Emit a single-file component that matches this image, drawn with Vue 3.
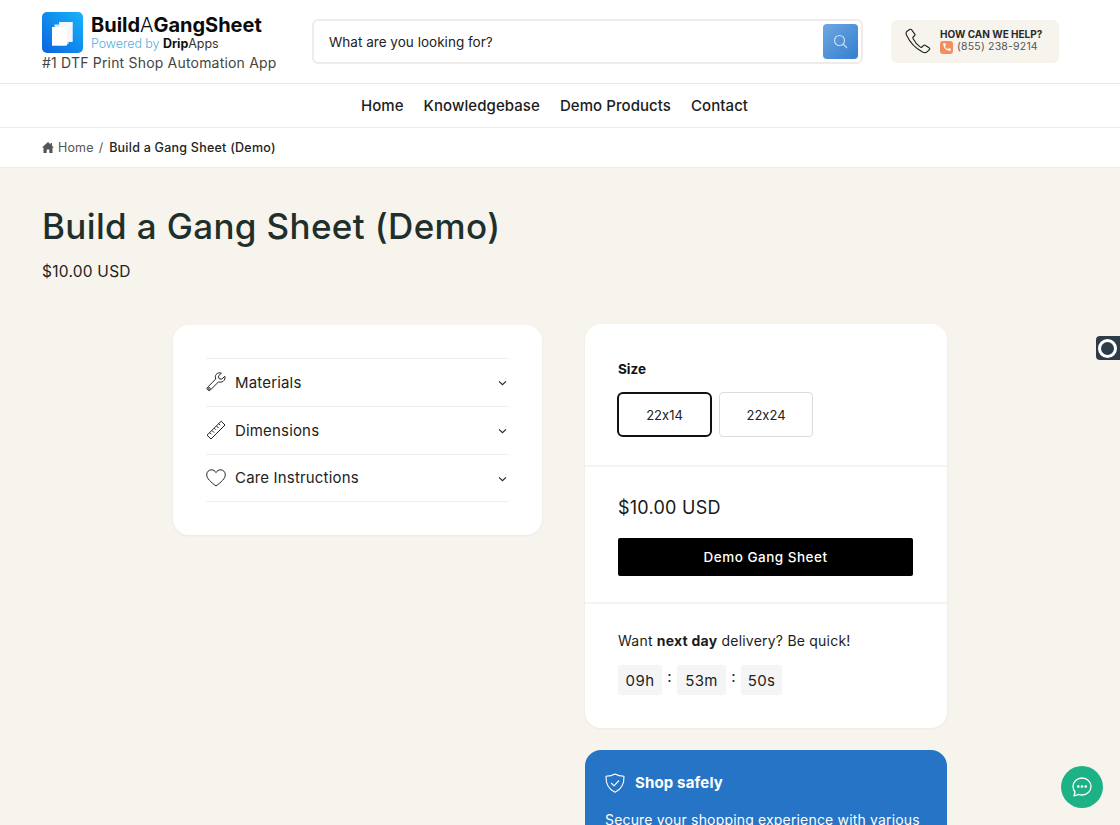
<script setup>
const navItems = ['Home', 'Knowledgebase', 'Demo Products', 'Contact']
const accordions = [
  { label: 'Materials', icon: 'wrench' },
  { label: 'Dimensions', icon: 'ruler' },
  { label: 'Care Instructions', icon: 'heart' }
]
</script>

<template>
  <div class="page">
    <header class="header">
      <div class="brand">
        <div class="brand-top">
          <div class="logo-mark">
            <svg width="41" height="41" viewBox="0 0 41 41">
              <defs>
                <linearGradient id="lg" x1="1" y1="0" x2="0" y2="1">
                  <stop offset="0" stop-color="#17b4fb" />
                  <stop offset="1" stop-color="#0a63e0" />
                </linearGradient>
              </defs>
              <rect width="41" height="41" rx="5" fill="url(#lg)" />
              <path d="M17 10h13.500v20h-4v2h-3v1.500H10V15h2.500v-2.500H17z" fill="#dcecfb" />
              <path d="M18 10h12.500v19.500H18z" fill="#f3f8fe" />
              <path d="M10 15h15v18.500H10z" fill="#ffffff" />
            </svg>
          </div>
          <div class="brand-text">
            <div class="brand-name"><b>Build</b><span class="thin">A</span><b>GangSheet</b></div>
            <div class="brand-sub"><span class="pow">Powered by </span><b>Drip</b><span>Apps</span></div>
          </div>
        </div>
        <div class="tagline">#1 DTF Print Shop Automation App</div>
      </div>

      <div class="search">
        <span class="search-text">What are you looking for?</span>
        <button class="search-btn" aria-label="Search">
          <svg width="15" height="15" viewBox="0 0 15 15" fill="none" stroke="#cfe3f7" stroke-width="1.100">
            <circle cx="6.500" cy="6.500" r="5" />
            <path d="M10.200 10.200L14 14" />
          </svg>
        </button>
      </div>

      <div class="help">
        <svg class="help-phone" width="26" height="26" viewBox="0 0 26 26" fill="none" stroke="#222" stroke-width="1.100" stroke-linejoin="round">
          <path d="M4.500 1.500L1.800 3.500C0.800 4.400 1 6 1.700 7.500C4.500 13.500 10 20 17.500 24C19.500 25 21 24.800 22 23.800L24.500 21.500C25 21 24.900 20.300 24.400 20L20 17.200C19.500 16.900 19 17 18.600 17.400L17 19C16.500 19.500 16 19.500 15.400 19.100C12.500 17 9.500 13.500 8 10.500C7.700 9.900 7.800 9.400 8.200 9L9.700 7.500C10.100 7.100 10.100 6.600 9.800 6.100L6.500 1.700C6 1.100 5.100 1 4.500 1.500Z" />
        </svg>
        <div class="help-text">
          <div class="help-title">HOW CAN WE HELP?</div>
          <div class="help-line">
            <span class="phone-chip">
              <svg width="10" height="10" viewBox="0 0 24 24" fill="#fff"><path d="M6.600 10.800a15 15 0 0 0 6.600 6.600l2.200-2.200c.3-.3.700-.4 1-.2 1.100.4 2.300.6 3.600.6.600 0 1 .4 1 1V20c0 .6-.4 1-1 1C10.600 21 3 13.400 3 4c0-.6.400-1 1-1h3.500c.6 0 1 .4 1 1 0 1.300.2 2.500.6 3.600.1.300 0 .7-.2 1z" /></svg>
            </span>
            <span>(855) 238-9214</span>
          </div>
        </div>
      </div>
    </header>

    <nav class="nav">
      <a v-for="item in navItems" :key="item" class="nav-link">{{ item }}</a>
    </nav>

    <div class="crumbs">
      <svg width="12" height="11" viewBox="0 0 12 11" fill="#555"><path d="M6 0L0 5.500h1.500V11h3.200V7.500h2.600V11h3.200V5.500H12L10 3.700V1H8.600v1.400z" /></svg>
      <span class="crumb-home">Home</span>
      <span class="crumb-sep">/</span>
      <span class="crumb-current">Build a Gang Sheet (Demo)</span>
    </div>

    <main class="main">
      <h1 class="title">Build a Gang Sheet (Demo)</h1>
      <div class="price-top">$10.00 USD</div>

      <div class="product">
        <section class="card left-card">
          <div class="accordion">
            <div v-for="a in accordions" :key="a.label" class="acc-row">
              <svg v-if="a.icon === 'wrench'" class="acc-icon" width="20" height="20" viewBox="0 0 20 20" fill="none" stroke="#222" stroke-width="1" stroke-linejoin="round">
                <path d="M18.800 4.300L15.700 7.200 13 6.600l-.7-2.500L15.400 1.200C13.500.4 11.200.9 10.100 2.500 9.100 3.900 9.200 5.700 9.800 7L1.700 15.100c-.9 1-.9 2 0 2.800.9.900 1.900.9 2.800 0l8.100-8.100c1.500.6 3.100.5 4.500-.5 1.600-1.200 2.300-3.100 1.700-5z" />
                <circle cx="3.200" cy="16.500" r="1" />
              </svg>
              <svg v-else-if="a.icon === 'ruler'" class="acc-icon" width="20" height="20" viewBox="0 0 20 20" fill="none" stroke="#222" stroke-width="1" stroke-linejoin="round">
                <path d="M15.200 1.200L19 5 5 19 1 15.200z" />
                <path d="M12.700 3.700l1.500 1.500M10.500 6l2 2M8.300 8.200l1.500 1.500M6 10.500l2 2M3.800 12.700l1.500 1.500" />
              </svg>
              <svg v-else class="acc-icon" width="20" height="18" viewBox="0 0 20 18" fill="none" stroke="#222" stroke-width="1" stroke-linejoin="round">
                <path d="M10 17C5 13 .7 9.800.7 5.700.7 2.800 2.900.8 5.400.8 7.300.8 9 1.800 10 3.600 11 1.800 12.700.8 14.600.8c2.500 0 4.700 2 4.700 4.900C19.300 9.800 15 13 10 17z" />
              </svg>
              <span class="acc-label">{{ a.label }}</span>
              <svg class="chev" width="9" height="6" viewBox="0 0 10 7" fill="none" stroke="#222" stroke-width="1.300"><path d="M1 1.500L5 5.500 9 1.500" /></svg>
            </div>
          </div>
        </section>

        <div class="right-col">
          <section class="card right-card">
            <div class="block size-block">
              <div class="size-label">Size</div>
              <div class="sizes">
                <div class="size active">22x14</div>
                <div class="size">22x24</div>
              </div>
            </div>
            <div class="block buy-block">
              <div class="price">$10.00 USD</div>
              <button class="buy">Demo Gang Sheet</button>
            </div>
            <div class="block timer-block">
              <div class="want">Want <b>next day</b> delivery? Be quick!</div>
              <div class="timer">
                <span class="t t1">09h</span>
                <span class="colon">:</span>
                <span class="t t2">53m</span>
                <span class="colon">:</span>
                <span class="t t3">50s</span>
              </div>
            </div>
          </section>

          <section class="safe">
            <div class="safe-head">
              <svg width="20" height="20" viewBox="0 0 20 20" fill="none" stroke="#fff" stroke-width="1.100" stroke-linejoin="round">
                <path d="M10 1C7.500 2.500 4.500 3.100 1 3.200 .8 10 2.800 16 10 19.200 17.200 16 19.200 10 19 3.200 15.500 3.100 12.500 2.500 10 1z" />
                <path d="M6.200 10l2.800 2.800 5-5.300" />
              </svg>
              <span>Shop safely</span>
            </div>
            <p class="safe-text">Secure your shopping experience with various payment options and buyer protection.</p>
          </section>
        </div>
      </div>
    </main>

    <div class="side-widget"><span class="ring"></span></div>

    <div class="chat">
      <svg width="22" height="22" viewBox="0 0 22 22" fill="none" stroke="#fff" stroke-width="1.300" stroke-linejoin="round">
        <path d="M11 2c5 0 9 3.600 9 8.500S16 19 11 19c-1.200 0-2.400-.2-3.400-.6L3 20l1-4C2.800 14.500 2 12.600 2 10.500 2 5.600 6 2 11 2z" />
        <circle cx="7.300" cy="10.500" r=".7" fill="#fff" />
        <circle cx="11" cy="10.500" r=".7" fill="#fff" />
        <circle cx="14.700" cy="10.500" r=".7" fill="#fff" />
      </svg>
    </div>
  </div>
</template>

<style>
html, body { margin: 0; overflow: hidden; height: 825px; background: #f7f4ee; }
</style>

<style scoped>
.page {
  position: relative;
  width: 1120px;
  height: 825px;
  overflow: hidden;
  background: #f7f4ee;
  font-family: Inter, "Liberation Sans", sans-serif;
  font-feature-settings: "calt" 0;
  color: #111;
}
.header {
  box-sizing: border-box;
  height: 84px;
  background: #fff;
  border-bottom: 1px solid #e9e9e9;
  display: flex;
  align-items: flex-start;
  padding: 0 0 0 42px;
}
.brand { width: 270px; padding-top: 12px; }
.brand-top { display: flex; gap: 8px; height: 41px; }
.logo-mark { width: 41px; height: 41px; }
.logo-mark svg { display: block; }
.brand-text { padding-top: 1px; }
.brand-name { font-size: 20px; line-height: 24px; letter-spacing: -0.02px; color: #0b0b0b; }
.brand-name b { font-weight: 700; }
.thin { font-weight: 300; }
.brand-sub { font-size: 12.500px; line-height: 13px; color: #333; letter-spacing: -0.05px; }
.pow { color: #56aee0; font-weight: 300; }
.brand-sub b { color: #111; font-weight: 700; }
.tagline { font-size: 14px; line-height: 18px; margin-top: 1px; color: #444; letter-spacing: 0.19px; }
.search {
  box-sizing: border-box;
  margin-top: 19px;
  width: 551px;
  height: 45px;
  background: #fff;
  border: 2px solid #eeecea;
  border-radius: 6px;
  display: flex;
  align-items: center;
  justify-content: space-between;
  padding: 0 3px 0 15px;
}
.search-text { font-size: 13.500px; color: #222; letter-spacing: 0.02px; }
.search-btn {
  width: 35px;
  height: 35px;
  border: 0;
  padding: 0;
  border-radius: 4px;
  background: linear-gradient(135deg, #6ea7e0, #337fd0);
  display: flex;
  align-items: center;
  justify-content: center;
}
.help {
  box-sizing: border-box;
  margin: 20px 0 0 28px;
  width: 168px;
  height: 43px;
  background: #f7f4ee;
  border-radius: 6px;
  display: flex;
  align-items: center;
  padding: 0 0 1px 14px;
  gap: 9px;
}
.help-title { font-size: 10px; line-height: 12px; font-weight: 700; color: #2a2a2a; letter-spacing: 0; }
.help-line { display: flex; align-items: center; gap: 4px; font-size: 10.500px; line-height: 14px; color: #555; letter-spacing: 0.2px; }
.phone-chip {
  width: 13px;
  height: 13px;
  border-radius: 3px;
  background: #f0905e;
  display: flex;
  align-items: center;
  justify-content: center;
}
.nav {
  box-sizing: border-box;
  height: 44px;
  background: #fff;
  border-bottom: 1px solid #ececec;
  display: flex;
  align-items: center;
  justify-content: center;
  gap: 20px;
  padding-right: 11px;
}
.nav-link { font-size: 15px; font-weight: 450; color: #1c1c1c; letter-spacing: 0.07px; }
.crumbs {
  box-sizing: border-box;
  height: 40px;
  background: #fff;
  border-bottom: 1px solid #efedea;
  display: flex;
  align-items: center;
  padding-left: 42px;
  font-size: 12.500px;
}
.crumb-home { margin-left: 4px; color: #555; letter-spacing: 0.15px; }
.crumb-sep { margin: 0 6px 0 5px; color: #555; }
.crumb-current { color: #222; font-weight: 500; letter-spacing: 0.24px; }
.main { padding: 0 0 0 42px; }
.title {
  margin: 33px 0 0;
  font-size: 35px;
  line-height: 50px;
  font-weight: 450;
  color: #1f2f2b;
  letter-spacing: 0.35px;
}
.price-top { margin-top: 10px; font-size: 15.500px; line-height: 22px; color: #222; letter-spacing: 0.25px; }
.product { display: flex; gap: 43px; margin: 41px 0 0 131px; align-items: flex-start; }
.card { background: #fff; box-shadow: 0 1px 3px rgba(0, 0, 0, 0.05); }
.left-card {
  box-sizing: border-box;
  width: 369px;
  height: 210px;
  margin-top: 1px;
  border-radius: 16px;
  padding: 33px 33px;
}
.accordion { border-top: 1px solid #efefef; }
.acc-row {
  height: 47px;
  padding-bottom: 1px;
  box-sizing: content-box;
  height: 46px;
  border-bottom: 1px solid #efefef;
  display: flex;
  align-items: center;
  font-size: 15px;
  color: #222;
}
.acc-row:last-child { height: 45px; }
.acc-icon { flex: none; width: 20px; margin-right: 9px; }
.acc-label { flex: 1; font-weight: 400; letter-spacing: 0.17px; }
.chev { margin-right: 2px; margin-top: 2px; }
.right-col { width: 362px; }
.right-card { border-radius: 16px; height: 404px; overflow: hidden; }
.block { box-sizing: border-box; padding: 0 33px 0 33px; }
.size-block { height: 143px; padding-top: 36px; border-bottom: 2px solid #f7f4ee; }
.size-label { font-size: 13.500px; line-height: 18px; font-weight: 700; color: #111; }
.sizes { display: flex; gap: 7px; margin: 14px 0 0 -1px; }
.size {
  box-sizing: border-box;
  width: 94px;
  height: 45px;
  border: 1px solid #dcdcdc;
  border-radius: 4px;
  display: flex;
  align-items: center;
  justify-content: center;
  font-size: 13px;
  color: #222;
}
.active { width: 95px; border: 2px solid #111; border-radius: 6px; }
.buy-block { height: 137px; padding-top: 27px; border-bottom: 2px solid #f7f4ee; }
.price { font-size: 18px; line-height: 27px; color: #181818; letter-spacing: 0.25px; }
.buy {
  display: block;
  width: 295px;
  height: 38px;
  margin-top: 17px;
  padding: 0;
  border: 0;
  border-radius: 2px;
  background: #000;
  color: #fff;
  font: 500 13.500px Inter, "Liberation Sans", sans-serif;
  letter-spacing: 0.5px;
}
.timer-block { padding-top: 27px; }
.want { font-size: 14px; line-height: 20px; color: #1c1c1c; letter-spacing: 0.22px; }
.want b { font-weight: 700; }
.timer { display: flex; align-items: flex-start; margin-top: 14px; }
.t {
  box-sizing: border-box;
  height: 30px;
  background: #f5f5f5;
  border-radius: 3px;
  display: flex;
  align-items: center;
  justify-content: center;
  font-size: 15px;
  color: #222;
  letter-spacing: 0.4px;
}
.t1 { width: 44px; }
.t2 { width: 49px; }
.t3 { width: 41px; }
.colon { width: 15px; text-align: center; font-size: 15px; line-height: 24px; color: #222; }
.safe {
  box-sizing: border-box;
  height: 200px;
  margin-top: 22px;
  padding: 23px 20px;
  background: #2674c5;
  border-radius: 16px;
  color: #fff;
}
.safe-head { display: flex; align-items: center; gap: 10px; font-size: 15px; font-weight: 700; line-height: 20px; letter-spacing: 0.15px; }
.safe-text { margin: 17px 0 0; font-size: 14px; line-height: 20px; letter-spacing: 0.17px; }
.side-widget {
  position: absolute;
  right: 0;
  top: 336px;
  width: 24px;
  height: 24px;
  background: #2e3c49;
  border-radius: 4px 0 0 4px;
  display: flex;
  align-items: center;
  padding-left: 2px;
  box-sizing: border-box;
}
.ring {
  box-sizing: border-box;
  width: 19px;
  height: 19px;
  border: 3px solid #fff;
  border-radius: 50%;
}
.chat {
  position: absolute;
  left: 1061px;
  top: 766px;
  width: 42px;
  height: 42px;
  border-radius: 50%;
  background: #1cb286;
  display: flex;
  align-items: center;
  justify-content: center;
}
</style>
